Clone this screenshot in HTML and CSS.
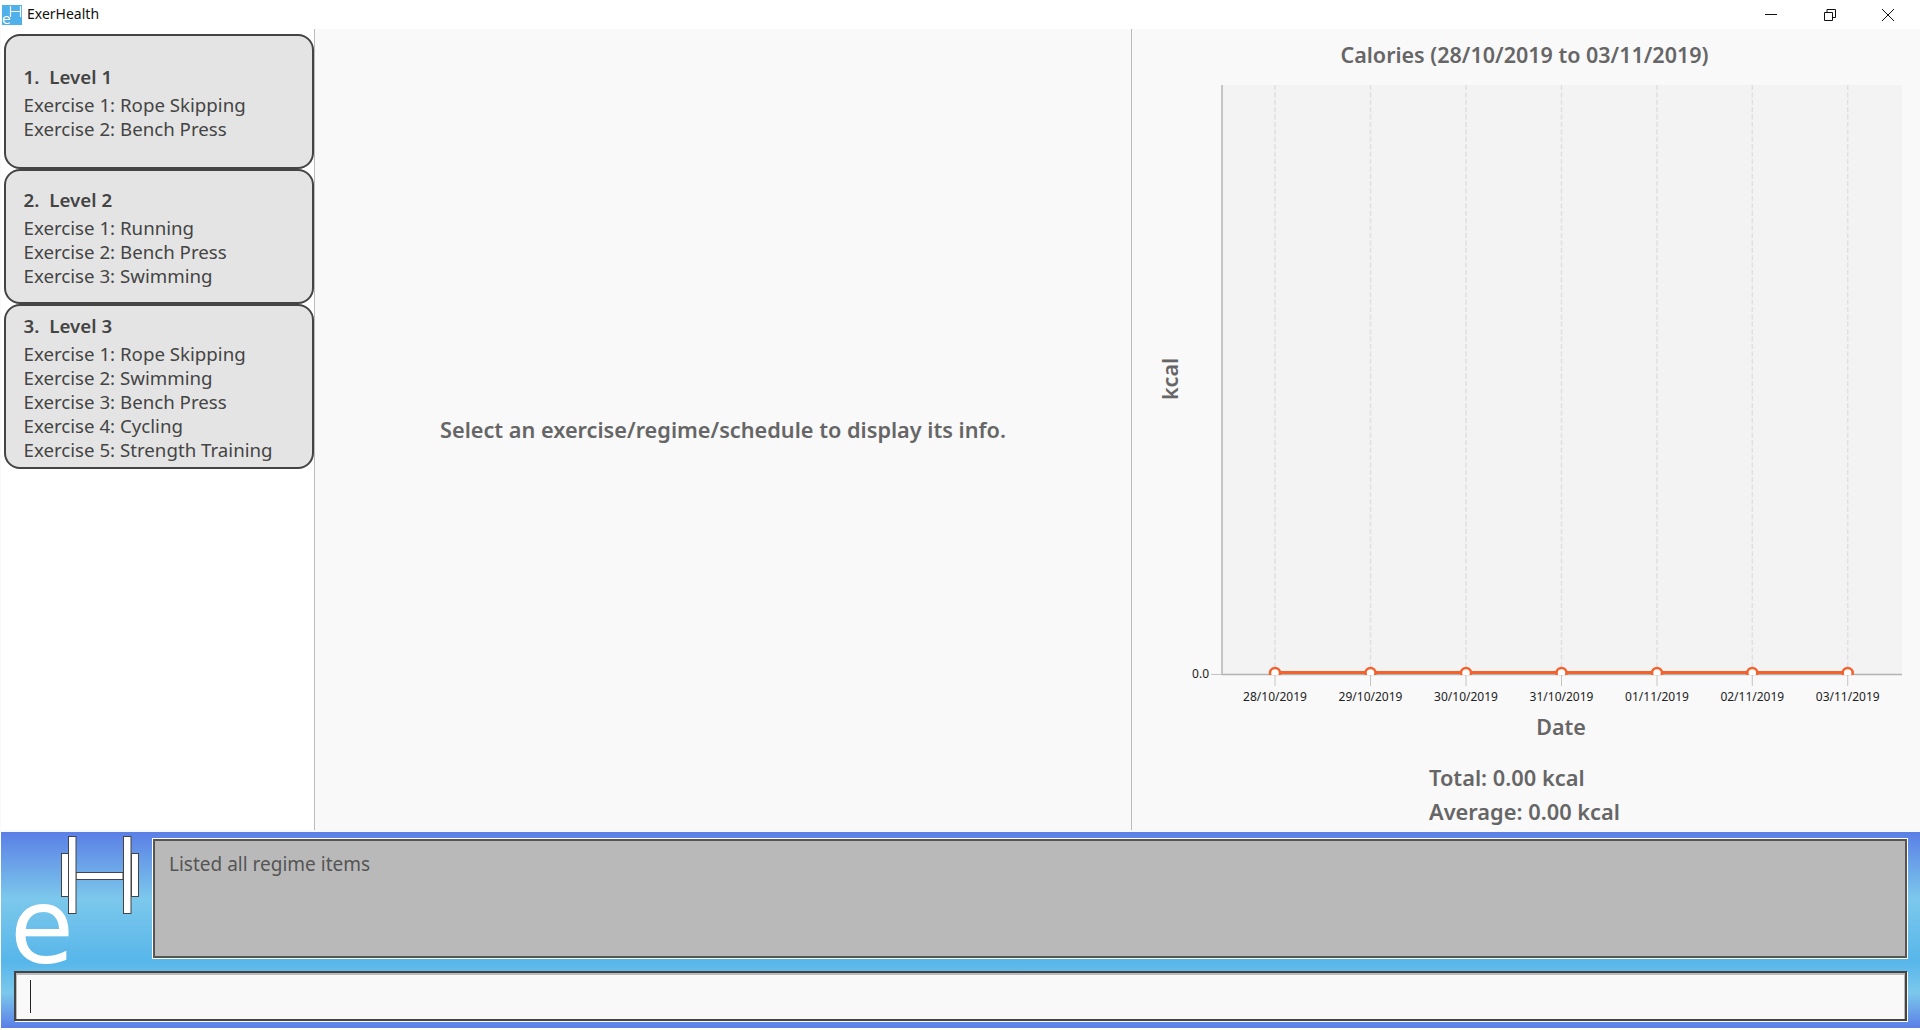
FILE: index.html
```html
<!DOCTYPE html>
<html lang="en">
<head>
    <meta charset="UTF-8">
    <title>ExerHealth</title>
    <link rel="stylesheet" href="styles.css">
</head>
<body>
<div class="titleBar">
    <svg class="appIcon" width="20" height="20" viewBox="0 0 20 20">
        <rect width="20" height="20" fill="#4fb0ea"/>
        <path d="M8.500 1v11M18.500 1v11M8.500 6.500h10" stroke="#fff" stroke-width="1.200" fill="none"/>
        <text x="0" y="19" class="appIconE">e</text>
    </svg>
    <span class="appName">ExerHealth</span>
    <div class="windowControls">
        <svg width="12" height="12" viewBox="0 0 12 12"><path d="M0 5.500h12" stroke="#111" fill="none"/></svg>
        <svg width="12" height="12" viewBox="0 0 12 12"><path d="M.5 3.500h8v8h-8zM3 3.500V.5h8.500v8h-3" stroke="#111" fill="none"/></svg>
        <svg width="12" height="12" viewBox="0 0 12 12"><path d="M0 0l12 12M12 0L0 12" stroke="#111" fill="none"/></svg>
    </div>
</div>

<div class="main">
    <div class="sidebar">
        <div class="card">
            <div class="cardTitle"><span class="cardIndex">1.</span>Level 1</div>
            <div>Exercise 1: Rope Skipping</div>
            <div>Exercise 2: Bench Press</div>
        </div>
        <div class="card">
            <div class="cardTitle"><span class="cardIndex">2.</span>Level 2</div>
            <div>Exercise 1: Running</div>
            <div>Exercise 2: Bench Press</div>
            <div>Exercise 3: Swimming</div>
        </div>
        <div class="card">
            <div class="cardTitle"><span class="cardIndex">3.</span>Level 3</div>
            <div>Exercise 1: Rope Skipping</div>
            <div>Exercise 2: Swimming</div>
            <div>Exercise 3: Bench Press</div>
            <div>Exercise 4: Cycling</div>
            <div>Exercise 5: Strength Training</div>
        </div>
    </div>

    <div class="infoPanel">Select an exercise/regime/schedule to display its info.</div>

    <div class="chartPanel">
        <div class="chartTitle">Calories (28/10/2019 to 03/11/2019)</div>
        <svg class="chart" width="787" height="680" viewBox="0 0 787 680">
            <rect x="89" y="4" width="680" height="589" fill="#f3f3f3"/>
            <g class="gridLines">
                <path d="M142 4v589M237.500 4v589M333 4v589M428.500 4v589M524 4v589M619.300 4v589M714.700 4v589"/>
            </g>
            <path class="axis" d="M89 4v589.500H769"/>
            <path class="ticks" d="M78 593.500h11M142 594v11M237.500 594v11M333 594v11M428.500 594v11M524 594v11M619.300 594v11M714.700 594v11"/>
            <text class="tickLabel" x="76" y="597" text-anchor="end">0.0</text>
            <g class="tickLabel" text-anchor="middle">
                <text x="142" y="620">28/10/2019</text>
                <text x="237.500" y="620">29/10/2019</text>
                <text x="333" y="620">30/10/2019</text>
                <text x="428.500" y="620">31/10/2019</text>
                <text x="524" y="620">01/11/2019</text>
                <text x="619.300" y="620">02/11/2019</text>
                <text x="714.700" y="620">03/11/2019</text>
            </g>
            <clipPath id="plotClip"><rect x="89" y="4" width="680" height="590"/></clipPath>
            <g clip-path="url(#plotClip)">
                <path class="seriesLine" d="M142 591.500H714.700"/>
                <g class="seriesDots">
                    <circle cx="142" cy="592" r="5"/>
                    <circle cx="237.500" cy="592" r="5"/>
                    <circle cx="333" cy="592" r="5"/>
                    <circle cx="428.500" cy="592" r="5"/>
                    <circle cx="524" cy="592" r="5"/>
                    <circle cx="619.300" cy="592" r="5"/>
                    <circle cx="714.700" cy="592" r="5"/>
                </g>
            </g>
            <text class="axisLabel" x="428" y="654" text-anchor="middle">Date</text>
            <text class="axisLabel" x="0" y="0" text-anchor="middle" transform="translate(45 298) rotate(-90)">kcal</text>
        </svg>
        <div class="summary">
            <div>Total: 0.00 kcal</div>
            <div>Average: 0.00 kcal</div>
        </div>
    </div>
</div>

<div class="commandArea">
    <div class="topRow">
        <svg class="logo" width="127" height="118" viewBox="0 0 127 118">
            <g class="logoBar">
                <rect x="62" y="36.500" width="47" height="7"/>
                <rect x="47.500" y="17.500" width="7" height="43"/>
                <rect x="117.500" y="17.500" width="7" height="43"/>
                <rect x="54.500" y=".5" width="7.500" height="77"/>
                <rect x="109.500" y=".5" width="7.500" height="77"/>
            </g>
            <text class="logoE" x="-4" y="127">e</text>
        </svg>
        <div class="resultBox">Listed all regime items</div>
    </div>
    <div class="commandBox"><span class="caret"></span></div>
</div>
</body>
</html>
```

FILE: styles.css
```css
html, body {
  margin: 0;
  width: 1920px;
  height: 1030px;
  overflow: hidden;
  background: #fff;
  font-family: 'Noto Sans', sans-serif;
  color: #444;
}

body {
  display: flex;
  flex-direction: column;
}

.titleBar {
  height: 29px;
  display: flex;
  align-items: center;
  padding-left: 2px;
  flex: none;
}

.appIcon {
  overflow: visible;
}

.appIconE {
  font-family: 'DejaVu Sans', sans-serif;
  font-size: 14px;
  fill: #fff;
}

.appName {
  margin: 0 0 2px 5px;
  font-size: 14px;
  color: #111;
}

.windowControls {
  margin-left: auto;
  display: flex;
  gap: 46.500px;
  padding-right: 26px;
}

.main {
  height: 803px;
  flex: none;
  display: flex;
  background: #f9f9f9;
  padding-left: 1px;
  box-sizing: border-box;
}

.sidebar {
  width: 314px;
  height: 801px;
  background: #fff;
  border-right: 1px solid #bbb;
  padding: 5px 0 0 3px;
  box-sizing: border-box;
  flex: none;
}

.card {
  width: 310px;
  box-sizing: border-box;
  min-height: 135px;
  display: flex;
  flex-direction: column;
  justify-content: center;
  padding: 8px 18px 5px 17.500px;
  background: #e4e4e4;
  border: 2px solid #444;
  border-radius: 16px;
  font-size: 18.700px;
  line-height: 24px;
}

.cardTitle {
  font-weight: 600;
  margin-bottom: 4px;
}

.cardIndex {
  margin-right: 10px;
}

.infoPanel {
  width: 817px;
  height: 801px;
  flex: none;
  box-sizing: border-box;
  border-right: 1px solid #bbb;
  display: flex;
  justify-content: center;
  padding-top: 386px;
  font-size: 21.700px;
  font-weight: 600;
  color: #666;
}

.chartPanel {
  flex: 1;
  display: flex;
  flex-direction: column;
}

.chartTitle {
  height: 52px;
  padding-right: 3px;
  text-align: center;
  font-size: 21.500px;
  font-weight: 600;
  color: #666;
  line-height: 52px;
}

.chart {
  display: block;
  flex: none;
  margin-left: 1px;
}

.gridLines path {
  stroke: #e0e0e0;
  stroke-width: 1.500;
  stroke-dasharray: 5 2.400;
  fill: none;
}

.axis {
  stroke: #b4b4b4;
  stroke-width: 1.500;
  fill: none;
}

.ticks {
  stroke: #c4c4c4;
  fill: none;
}

.tickLabel {
  font-size: 12px;
  fill: #222;
}

.axisLabel {
  font-size: 21.500px;
  font-weight: 600;
  fill: #666;
}

.seriesLine {
  stroke: #f3622d;
  stroke-width: 3;
  fill: none;
}

.seriesDots circle {
  fill: #fff;
  stroke: #f3622d;
  stroke-width: 2.500;
}

.summary {
  align-self: center;
  margin-right: 3px;
  font-size: 21.800px;
  font-weight: 600;
  color: #666;
  line-height: 34px;
}

.commandArea {
  height: 196px;
  flex: none;
  margin-left: 1px;
  background: linear-gradient(180deg, #5a7fe6 0, #7cc8ec 34%, #57b6ea 66%, #7cc8ec 82%, #5a7fe6 100%);
  box-sizing: border-box;
  padding: 7px 13px 7px 13px;
  display: flex;
  flex-direction: column;
  gap: 13px;
}

.topRow {
  display: flex;
  gap: 12px;
}

.logo {
  flex: none;
  margin-top: -3px;
  overflow: visible;
}

.logoBar rect {
  fill: #fff;
  stroke: #444;
  stroke-width: 1;
}

.logoE {
  font-family: 'DejaVu Sans', sans-serif;
  font-size: 104px;
  fill: #fff;
}

.resultBox {
  flex: 1;
  height: 119px;
  box-sizing: border-box;
  background: #b9b9b9;
  border: 2px solid #555;
  outline: 1px solid #fff;
  padding: 8px 14px;
  font-size: 19px;
  line-height: 30px;
  color: #555;
}

.commandBox {
  height: 50px;
  box-sizing: border-box;
  background: #f9f9f9;
  border: 2px solid #444;
  box-shadow: inset 0 1px 0 1px #bbb, 1px 1px 0 #fff;
  display: flex;
  align-items: center;
  padding-left: 14px;
}

.caret {
  width: 1px;
  height: 33px;
  background: #222;
}
```
